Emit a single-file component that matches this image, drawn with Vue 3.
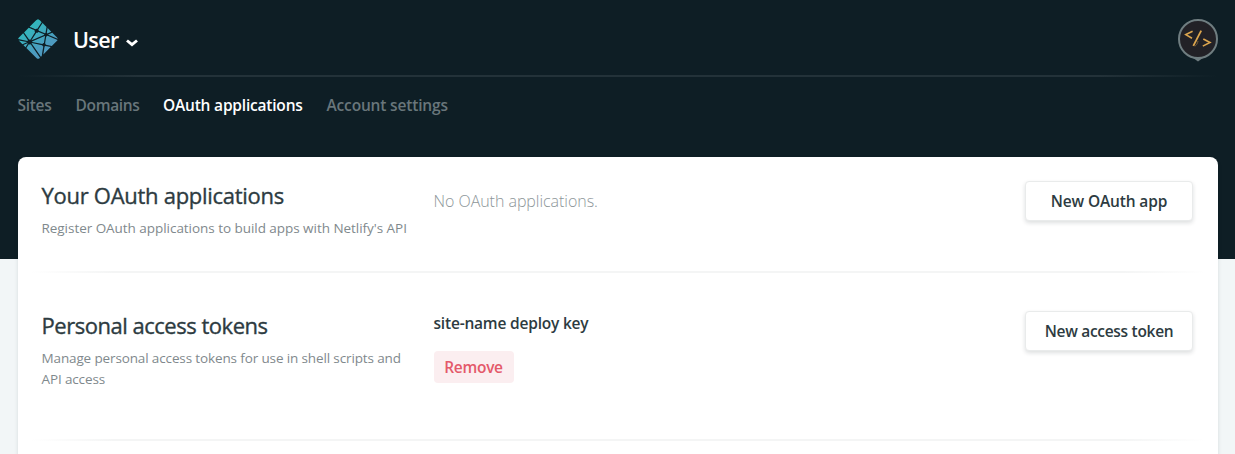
<script setup>
const tabs = [
  { label: 'Sites', key: 'sites' },
  { label: 'Domains', key: 'domains' },
  { label: 'OAuth applications', key: 'oauth', active: true },
  { label: 'Account settings', key: 'account' },
]
</script>

<template>
  <div class="page">
    <header class="top">
      <div class="brand-row">
        <div class="brand">
          <svg class="logo" viewBox="0.6 0.5 38.8 38.8" width="40" height="40">
            <defs>
              <linearGradient id="logo-fill" x1="0.25" y1="0.15" x2="0.65" y2="0.7">
                <stop offset="0%" stop-color="#30b9bb" />
                <stop offset="100%" stop-color="#4d9abf" />
              </linearGradient>
            </defs>
            <path fill="url(#logo-fill)" d="M28.589 14.135l-.014-.006c-.008-.003-.016-.006-.023-.013a.11.11 0 0 1-.028-.093l.773-4.726 3.625 3.626-3.77 1.604a.083.083 0 0 1-.033.006h-.015c-.005-.003-.01-.007-.02-.017a1.716 1.716 0 0 0-.495-.381zm5.258-.288l3.876 3.876c.805.806 1.208 1.208 1.355 1.674.022.069.04.138.054.209l-9.263-3.923a.728.728 0 0 0-.015-.006c-.037-.015-.08-.032-.08-.07 0-.038.044-.056.081-.071l.012-.005 3.98-1.684zm5.127 7.003c-.2.376-.59.766-1.25 1.427l-4.37 4.369-5.652-1.177-.03-.006c-.05-.008-.103-.017-.103-.062a1.706 1.706 0 0 0-.655-1.193c-.023-.023-.017-.059-.01-.092 0-.005 0-.01.002-.014l1.063-6.526.004-.022c.006-.05.015-.108.06-.108a1.73 1.73 0 0 0 1.16-.665c.009-.01.015-.021.027-.027.032-.015.07 0 .103.014l9.65 4.082zm-6.625 6.801l-7.186 7.186 1.23-7.56.002-.01c.001-.01.003-.02.006-.029.01-.024.036-.034.061-.044l.012-.005a1.85 1.85 0 0 0 .695-.517c.024-.028.053-.055.09-.06a.09.09 0 0 1 .029 0l5.06 1.04zm-8.707 8.707l-.81.81-8.955-12.942a.424.424 0 0 0-.01-.014c-.014-.019-.029-.038-.026-.06.001-.016.011-.03.022-.042l.01-.013c.027-.04.05-.08.075-.123l.02-.035.003-.003c.014-.024.027-.047.051-.06.021-.01.05-.006.073-.001l9.921 2.046a.164.164 0 0 1 .076.033c.013.013.016.027.019.043a1.757 1.757 0 0 0 1.028 1.175c.028.014.016.045.003.078a.238.238 0 0 0-.015.045c-.125.76-1.197 7.298-1.485 9.063zm-1.692 1.691c-.597.591-.949.904-1.347 1.03a2 2 0 0 1-1.206 0c-.466-.148-.869-.55-1.674-1.356L8.73 28.73l2.349-3.643c.011-.018.022-.034.04-.047.025-.018.061-.01.091 0a2.434 2.434 0 0 0 1.638-.083c.027-.01.054-.017.075.002a.19.19 0 0 1 .028.032L21.95 38.05zM7.863 27.863L5.8 25.8l4.074-1.738a.084.084 0 0 1 .033-.007c.034 0 .054.034.072.065a2.91 2.91 0 0 0 .13.184l.013.016c.012.017.004.034-.008.05l-2.25 3.493zm-2.976-2.976l-2.61-2.61c-.444-.444-.766-.766-.99-1.043l7.936 1.646a.84.84 0 0 0 .03.005c.049.008.103.017.103.063 0 .05-.059.073-.109.092l-.023.01-4.337 1.837zM.831 19.892a2 2 0 0 1 .09-.495c.148-.466.55-.868 1.356-1.674l3.34-3.34a2175.525 2175.525 0 0 0 4.626 6.687c.027.036.057.076.026.106-.146.161-.292.337-.395.528a.16.16 0 0 1-.05.062c-.013.008-.027.005-.042.002H9.78L.831 19.891zm5.68-6.403l4.491-4.491c.422.185 1.958.834 3.332 1.414 1.04.44 1.988.84 2.286.97.03.012.057.024.07.054.008.018.004.041 0 .06a2.003 2.003 0 0 0 .523 1.828c.03.03 0 .073-.026.11l-.014.021-4.56 7.063c-.012.02-.023.037-.043.05-.024.015-.058.008-.086.001a2.274 2.274 0 0 0-.543-.074c-.164 0-.342.03-.522.063h-.001c-.02.003-.038.007-.054-.005a.21.21 0 0 1-.045-.051l-4.808-7.013zm5.398-5.398l5.814-5.814c.805-.805 1.208-1.208 1.674-1.355a2 2 0 0 1 1.206 0c.466.147.869.55 1.674 1.355l1.26 1.26-4.135 6.404a.155.155 0 0 1-.041.048c-.025.017-.06.01-.09 0a2.097 2.097 0 0 0-1.92.37c-.027.028-.067.012-.101-.003-.54-.235-4.74-2.01-5.341-2.265zm12.506-3.676l3.818 3.818-.92 5.698v.015a.135.135 0 0 1-.008.038c-.01.02-.03.024-.05.03a1.83 1.83 0 0 0-.548.273.154.154 0 0 0-.02.017c-.011.012-.022.023-.04.025a.114.114 0 0 1-.043-.007l-5.818-2.472-.011-.005c-.037-.015-.081-.033-.081-.071a2.198 2.198 0 0 0-.31-.915c-.028-.046-.059-.094-.035-.141l4.066-6.303zm-3.932 8.606l5.454 2.31c.03.014.063.027.076.058a.106.106 0 0 1 0 .057c-.016.08-.03.171-.03.263v.153c0 .038-.039.054-.075.069l-.011.004c-.864.369-12.13 5.173-12.147 5.173-.017 0-.035 0-.052-.017-.03-.03 0-.072.027-.11a.76.76 0 0 0 .014-.02l4.482-6.94.008-.012c.026-.042.056-.089.104-.089l.045.007c.102.014.192.027.283.027.68 0 1.31-.331 1.69-.897a.16.16 0 0 1 .034-.04c.027-.02.067-.01.098.004zm-6.246 9.185l12.28-5.237s.018 0 .035.017c.067.067.124.112.179.154l.027.017c.025.014.05.03.052.056 0 .01 0 .016-.002.025L25.756 23.7l-.004.026c-.007.05-.014.107-.061.107a1.729 1.729 0 0 0-1.373.847l-.005.008c-.014.023-.027.045-.05.057-.021.01-.048.006-.07.001l-9.793-2.02c-.01-.002-.152-.519-.163-.52z" />
          </svg>
          <span class="team">User</span>
          <svg class="caret" viewBox="0 0 12 8" width="12" height="8">
            <path d="M1 1.500 6 5.700l5-4.200" fill="none" stroke="#fff" stroke-width="2.900" />
          </svg>
        </div>
        <svg class="avatar" viewBox="0 0 40 43" width="40" height="43">
          <path d="M14.500 38.500 20 42.500l5.500-4z" fill="#6f7d80" />
          <circle cx="20" cy="20" r="19" fill="#222126" stroke="#6f7d80" stroke-width="2" />
          <g fill="none" stroke="#dda64e" stroke-width="1.600">
            <path d="M14.600 12.300 7.800 15.600l6.200 3.600" />
            <path d="M23.200 11.600 15.300 26.800" stroke-width="1.800" />
            <path d="M25.300 20l6.700 3.500-7.200 3.600" />
            <path d="M20 22c-.4 2.500-1.600 4.200-3.200 5.300" stroke="#85683c" stroke-width=".8" />
          </g>
        </svg>
      </div>
      <nav class="tabs">
        <a v-for="t in tabs" :key="t.key" :class="['tab', t.key, { active: t.active }]">{{ t.label }}</a>
      </nav>
    </header>

    <main class="card">
      <section class="row">
        <div class="about">
          <h2 class="t-oauth">Your OAuth applications</h2>
          <p class="d-oauth">Register OAuth applications to build apps with Netlify's API</p>
        </div>
        <div class="content">
          <p class="empty">No OAuth applications.</p>
        </div>
        <button class="btn b-oauth">New OAuth app</button>
      </section>
      <section class="row second">
        <div class="about">
          <h2 class="t-token">Personal access tokens</h2>
          <p class="d-token">Manage personal access tokens for use in shell scripts and<br />API access</p>
        </div>
        <div class="content">
          <h3 class="key">site-name deploy key</h3>
          <button class="remove">Remove</button>
        </div>
        <button class="btn b-token">New access token</button>
      </section>
    </main>
  </div>
</template>

<style>
body { background: #f2f6f7; }
</style>

<style scoped>
.page {
  box-sizing: border-box;
  height: 454px;
  overflow: hidden;
  padding: 0 17px 0 18px;
  font-family: "Open Sans", "Noto Sans", sans-serif;
  color: #2d3b41;
  background: linear-gradient(#0e1e25 259px, #f2f6f7 259px);
}
h2, h3, p { margin: 0; white-space: nowrap; }
.brand-row {
  box-sizing: border-box;
  height: 77px;
  padding-top: 19px;
  display: flex;
  justify-content: space-between;
  align-items: flex-start;
  background: linear-gradient(90deg, rgba(35, 50, 57, 0), #233239 10%, #233239 90%, rgba(35, 50, 57, 0)) bottom / 100% 2px no-repeat;
}
.brand { display: flex; align-items: center; height: 40px; }
.team {
  margin: 1px 0 0 15px;
  width: 46px;
  font-size: 21.500px;
  line-height: 30px;
  letter-spacing: -.6px;
  font-weight: 600;
  color: #fff;
}
.caret { margin: 8px 0 0 7px; }
.tabs { display: flex; height: 80px; padding-top: 16px; box-sizing: border-box; margin-left: -.5px; }
.tab {
  font-size: 15.500px;
  line-height: 24px;
  font-weight: 600;
  color: #69767b;
  white-space: nowrap;
}
.sites { width: 58px; letter-spacing: -.3px; }
.domains { width: 87.500px; letter-spacing: -.32px; }
.oauth { width: 163.500px; letter-spacing: -.2px; }
.account { letter-spacing: -.17px; }
.active { color: #fff; }
.card {
  height: 320px;
  border-radius: 8px 8px 0 0;
  background: #fff;
  box-shadow: 0 2px 4px rgba(14, 30, 37, .12);
}
.row {
  box-sizing: border-box;
  height: 116px;
  padding: 24px 25px 0 23.500px;
  display: flex;
  align-items: flex-start;
  background: linear-gradient(90deg, rgba(244, 245, 245, 0) 1%, #f4f5f5 8%, #f4f5f5 92%, rgba(244, 245, 245, 0) 99%) bottom / 100% 2px no-repeat;
}
.second { height: 168px; padding-top: 38px; }
.about { width: 392px; }
.about h2 { margin-top: -1px; font-size: 22px; line-height: 30px; font-weight: 400; -webkit-text-stroke: .35px #2d3b41; }
.t-oauth { letter-spacing: -.28px; }
.t-token { letter-spacing: -.48px; }
.about p { margin-top: 8px; font-size: 13.500px; line-height: 21px; color: #7f898d; }
.d-oauth { letter-spacing: -.04px; }
.d-token { letter-spacing: -.13px; }
.content { flex: 1; }
.empty { margin-top: 8px; font-size: 16px; line-height: 24px; font-weight: 300; letter-spacing: -.04px; color: #8d9699; }
.key { font-size: 15.500px; line-height: 24px; font-weight: 600; letter-spacing: -.2px; }
.btn {
  width: 168px;
  height: 40px;
  padding: 0;
  border: 1px solid #e9ebeb;
  border-radius: 4px;
  background: #fff;
  box-shadow: 0 2px 4px rgba(14, 30, 37, .14);
  font: 600 15.500px/24px "Open Sans", "Noto Sans", sans-serif;
  color: #2d3b41;
}
.b-oauth { letter-spacing: -.15px; }
.b-token { letter-spacing: -.3px; }
.remove {
  display: block;
  margin-top: 16px;
  width: 80px;
  height: 32px;
  padding: 0;
  border: 0;
  border-radius: 4px;
  background: #fbeef0;
  font: 600 15.500px/24px "Open Sans", "Noto Sans", sans-serif;
  letter-spacing: -.3px;
  color: #e4596a;
}
</style>
